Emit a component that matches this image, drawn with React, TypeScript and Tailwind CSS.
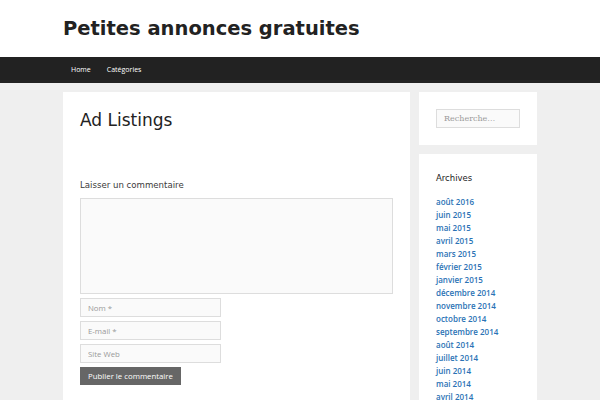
export default function App() {
  const archives = [
    "août 2016",
    "juin 2015",
    "mai 2015",
    "avril 2015",
    "mars 2015",
    "février 2015",
    "janvier 2015",
    "décembre 2014",
    "novembre 2014",
    "octobre 2014",
    "septembre 2014",
    "août 2014",
    "juillet 2014",
    "juin 2014",
    "mai 2014",
    "avril 2014",
  ]

  return (
    <div className="min-h-screen bg-[#efefef] font-['DejaVu_Sans',sans-serif] text-[#3a3a3a]">
      {/* Header */}
      <header className="h-[57px] bg-white pt-[17px] pl-[63px]">
        <h1 className="text-[19.5px] leading-[24px] font-bold text-[#222]">Petites annonces gratuites</h1>
      </header>

      {/* Nav */}
      <nav className="h-[26px] bg-[#222] pl-[63px] flex items-center font-['Open_Sans',sans-serif] text-[7px] text-white">
        <a className="px-[8px]">Home</a>
        <a className="px-[8px]">Catégories</a>
      </nav>

      <div className="ml-[63px] w-[474px] pt-[9px] flex gap-[9px] items-start">
        {/* Main content */}
        <main className="w-[347px] bg-white pt-[18px] px-[17px] pb-[40px]">
          <h2 className="text-[17px] leading-[20px] text-[#222]">Ad Listings</h2>

          <h3 className="mt-[49px] text-[8.6px] leading-[12px] text-[#3a3a3a]">Laisser un commentaire</h3>

          <form className="mt-[7px] flex flex-col gap-[4px]">
            <textarea className="block w-[313px] h-[96px] bg-[#fafafa] border border-[#ddd] resize-none" />
            <input
              placeholder="Nom *"
              className="block w-[141px] h-[19px] bg-[#fafafa] border border-[#ddd] px-[7px] font-['Open_Sans',sans-serif] text-[7.8px] placeholder:text-[#999]"
            />
            <input
              placeholder="E-mail *"
              className="block w-[141px] h-[19px] bg-[#fafafa] border border-[#ddd] px-[7px] font-['Open_Sans',sans-serif] text-[7.8px] placeholder:text-[#999]"
            />
            <input
              placeholder="Site Web"
              className="block w-[141px] h-[19px] bg-[#fafafa] border border-[#ddd] px-[7px] font-['Open_Sans',sans-serif] text-[7.8px] placeholder:text-[#999]"
            />
            <button
              type="button"
              className="block w-[101px] h-[18px] bg-[#666] text-white font-['Open_Sans',sans-serif] text-[7.8px] leading-[18px]"
            >
              Publier le commentaire
            </button>
          </form>
        </main>

        {/* Sidebar */}
        <aside className="w-[118px] flex flex-col gap-[9px]">
          <div className="bg-white p-[17px]">
            <input
              placeholder="Recherche…"
              className="block w-[84px] h-[19px] bg-[#fafafa] border border-[#ddd] px-[7px] font-['DejaVu_Serif',serif] text-[8px] placeholder:text-[#999]"
            />
          </div>

          <div className="bg-white px-[17px] pt-[18px] pb-[20px]">
            <h4 className="text-[8.5px] leading-[12px] text-[#222]">Archives</h4>
            <ul className="mt-[11px] font-['Open_Sans',sans-serif] font-semibold text-[8px] leading-[13px] text-[#2a72b5]">
              {archives.map((a) => (
                <li key={a}>
                  <a>{a}</a>
                </li>
              ))}
            </ul>
          </div>
        </aside>
      </div>
    </div>
  )
}
